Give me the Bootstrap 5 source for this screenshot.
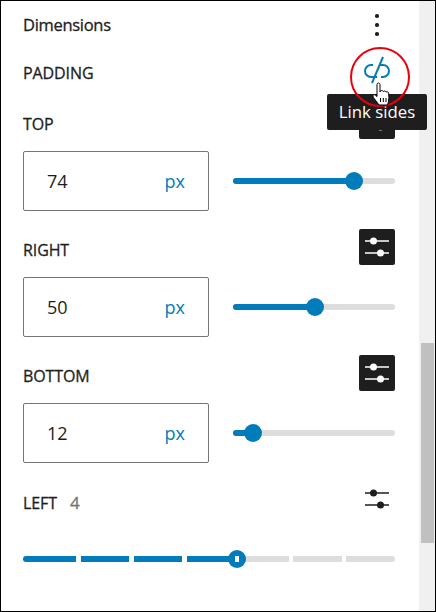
<!DOCTYPE html>
<html lang="en">
<head>
    <meta charset="UTF-8">
    <meta name="viewport" content="width=device-width, initial-scale=1.0">
    <title>Dimensions</title>
    <link href="https://cdn.jsdelivr.net/npm/bootstrap@5.3.2/dist/css/bootstrap.min.css" rel="stylesheet">
    <style>
        html, body { height: 100%; overflow: hidden; }
        body { background: #fff; color: #1e1e1e; font-family: "Open Sans", "Noto Sans", sans-serif; }
        .frame { position: relative; height: 612px; border: 1px solid #000; }
        .panel { width: 418px; padding: 0 24px 0 22px; }
        .head-row { height: 48px; }
        .head-title { font-size: 16.5px; letter-spacing: -.3px; -webkit-text-stroke: .3px #1e1e1e; }
        .side-label { font-size: 16px; letter-spacing: -.1px; -webkit-text-stroke: .3px #1e1e1e; }
        .pad-row { height: 48px; margin-bottom: 6px; }
        .field-head { height: 36px; }
        .field-head .side-label { padding-top: 9px; }
        .more-btn { width: 8px; gap: 5.5px; margin-right: 14px; }
        .more-btn i { display: block; width: 3.5px; height: 3.5px; border-radius: 50%; background: #1e1e1e; }
        .tune-btn { width: 36px; height: 36px; border-radius: 2px; background: #1e1e1e; }
        .tune-plain { width: 36px; height: 36px; }
        .field-row { margin-top: 12px; margin-bottom: 18px; height: 60px; gap: 24px; }
        .num-box { width: 186px; height: 60px; border: 1px solid #757575; border-radius: 2px; padding: 0 23px; font-size: 18px; }
        .num-unit { color: #007cba; font-size: 18px; }
        .slide-wrap { position: relative; width: 162px; height: 6px; border-radius: 3px; background: #ddd; }
        .slide-fill { height: 6px; border-radius: 3px; background: #007cba; }
        .slide-thumb { position: absolute; top: -6px; width: 18px; height: 18px; margin-left: -9px; border-radius: 50%; background: #007cba; }
        .left-value { color: #757575; font-size: 17px; margin-left: 13px; -webkit-text-stroke: .3px #757575; }
        .step-wrap { position: relative; margin-top: 39px; height: 6px; }
        .step-seg { display: block; height: 6px; background: #ddd; }
        .step-on { background: #007cba; }
        .step-thumb { top: -6px; left: 214px; display: flex; align-items: center; justify-content: center; }
        .step-thumb i { display: block; width: 4px; height: 6px; background: #fff; }
        .scroll-track { width: 16px; background: #f0f0f0; padding-top: 342px; padding-left: 2px; }
        .scroll-thumb { width: 13px; height: 200px; background: #c0c0c0; }
        .link-icon { margin-right: 3px; margin-bottom: 4px; }
        .ring-mark { position: absolute; left: 349px; top: 46px; width: 60px; height: 60px; border: 2px solid #e8000d; border-radius: 50%; }
        .hand-cursor { position: absolute; left: 371px; top: 81px; }
        .tip-box { position: absolute; left: 326px; top: 93px; width: 100px; height: 36px; border-radius: 2px; background: #1e1e1e; color: #fff; font-size: 16.8px; }
    </style>
</head>
<body>
    <div class="frame d-flex justify-content-between">
        <div class="panel">
            <div class="head-row d-flex align-items-center justify-content-between">
                <span class="head-title">Dimensions</span>
                <span class="more-btn d-flex flex-column align-items-center"><i></i><i></i><i></i></span>
            </div>
            <div class="pad-row d-flex align-items-center justify-content-between">
                <span class="side-label">PADDING</span>
                <svg class="link-icon" width="30" height="30" viewBox="0 0 30 30" fill="none" stroke="#007cba" stroke-width="2">
                    <path d="M11 9H9a6 6 0 0 0 0 12h6"/>
                    <path d="M18 9h3a6 6 0 0 1 0 12h-2"/>
                    <path d="M21 1 10 27"/>
                </svg>
            </div>

            <div class="field-head d-flex justify-content-between">
                <span class="side-label">TOP</span>
                <span class="tune-btn d-flex align-items-center justify-content-center">
                    <svg width="24" height="24" viewBox="0 0 24 24"><path d="M0 6h24M0 18h24" stroke="#fff" stroke-width="1.500"/><circle cx="8.500" cy="6" r="3.500" fill="#fff"/><circle cx="15.500" cy="18" r="3.500" fill="#fff"/></svg>
                </span>
            </div>
            <div class="field-row d-flex align-items-center">
                <div class="num-box d-flex align-items-center justify-content-between"><span>74</span><span class="num-unit">px</span></div>
                <div class="slide-wrap"><div class="slide-fill" style="width: 121px"></div><span class="slide-thumb" style="left: 121px"></span></div>
            </div>

            <div class="field-head d-flex justify-content-between">
                <span class="side-label">RIGHT</span>
                <span class="tune-btn d-flex align-items-center justify-content-center">
                    <svg width="24" height="24" viewBox="0 0 24 24"><path d="M0 6h24M0 18h24" stroke="#fff" stroke-width="1.500"/><circle cx="8.500" cy="6" r="3.500" fill="#fff"/><circle cx="15.500" cy="18" r="3.500" fill="#fff"/></svg>
                </span>
            </div>
            <div class="field-row d-flex align-items-center">
                <div class="num-box d-flex align-items-center justify-content-between"><span>50</span><span class="num-unit">px</span></div>
                <div class="slide-wrap"><div class="slide-fill" style="width: 82px"></div><span class="slide-thumb" style="left: 82px"></span></div>
            </div>

            <div class="field-head d-flex justify-content-between">
                <span class="side-label">BOTTOM</span>
                <span class="tune-btn d-flex align-items-center justify-content-center">
                    <svg width="24" height="24" viewBox="0 0 24 24"><path d="M0 6h24M0 18h24" stroke="#fff" stroke-width="1.500"/><circle cx="8.500" cy="6" r="3.500" fill="#fff"/><circle cx="15.500" cy="18" r="3.500" fill="#fff"/></svg>
                </span>
            </div>
            <div class="field-row d-flex align-items-center">
                <div class="num-box d-flex align-items-center justify-content-between"><span>12</span><span class="num-unit">px</span></div>
                <div class="slide-wrap"><div class="slide-fill" style="width: 20px"></div><span class="slide-thumb" style="left: 20px"></span></div>
            </div>

            <div class="field-head d-flex justify-content-between">
                <span class="side-label">LEFT<span class="left-value">4</span></span>
                <span class="tune-plain d-flex align-items-center justify-content-center">
                    <svg width="24" height="24" viewBox="0 0 24 24"><path d="M0 6h24M0 18h24" stroke="#1e1e1e" stroke-width="1.500"/><circle cx="8.500" cy="6" r="3.500" fill="#1e1e1e"/><circle cx="15.500" cy="18" r="3.500" fill="#1e1e1e"/></svg>
                </span>
            </div>
            <div class="step-wrap d-flex">
                <span class="step-seg step-on rounded-start" style="width: 53px; margin-right: 5px"></span>
                <span class="step-seg step-on" style="width: 48px; margin-right: 5px"></span>
                <span class="step-seg step-on" style="width: 48px; margin-right: 5px"></span>
                <span class="step-seg step-on" style="width: 50px"></span>
                <span class="step-seg" style="width: 52px; margin-right: 4px"></span>
                <span class="step-seg" style="width: 49px; margin-right: 4px"></span>
                <span class="step-seg rounded-end" style="width: 49px"></span>
                <span class="slide-thumb step-thumb"><i></i></span>
            </div>
        </div>
        <div class="scroll-track"><div class="scroll-thumb"></div></div>

        <div class="tip-box d-flex align-items-center justify-content-center">Link sides</div>
        <span class="ring-mark"></span>
        <svg class="hand-cursor" width="22" height="26" viewBox="0 0 22 26">
            <path d="M5 2.500c0-2 3-2 3 0V10l.5-1c1-.8 2.400-.5 2.800.5.8-.8 2.300-.6 2.700.6 1-.6 2.500-.2 2.700 1 .3 3 .3 6-.2 8.400l-1 3.500H7L2.500 17C1.600 15.800 1 15 .9 14c0-1.200 1.300-1.700 2.300-1L5 14.500z" fill="#fff" stroke="#000" stroke-width="1"/>
            <path d="M8.500 16v4M11.300 16v4M14 16v4" stroke="#000" stroke-width="1"/>
        </svg>
    </div>
    <script src="https://cdn.jsdelivr.net/npm/bootstrap@5.3.2/dist/js/bootstrap.bundle.min.js"></script>
</body>
</html>
